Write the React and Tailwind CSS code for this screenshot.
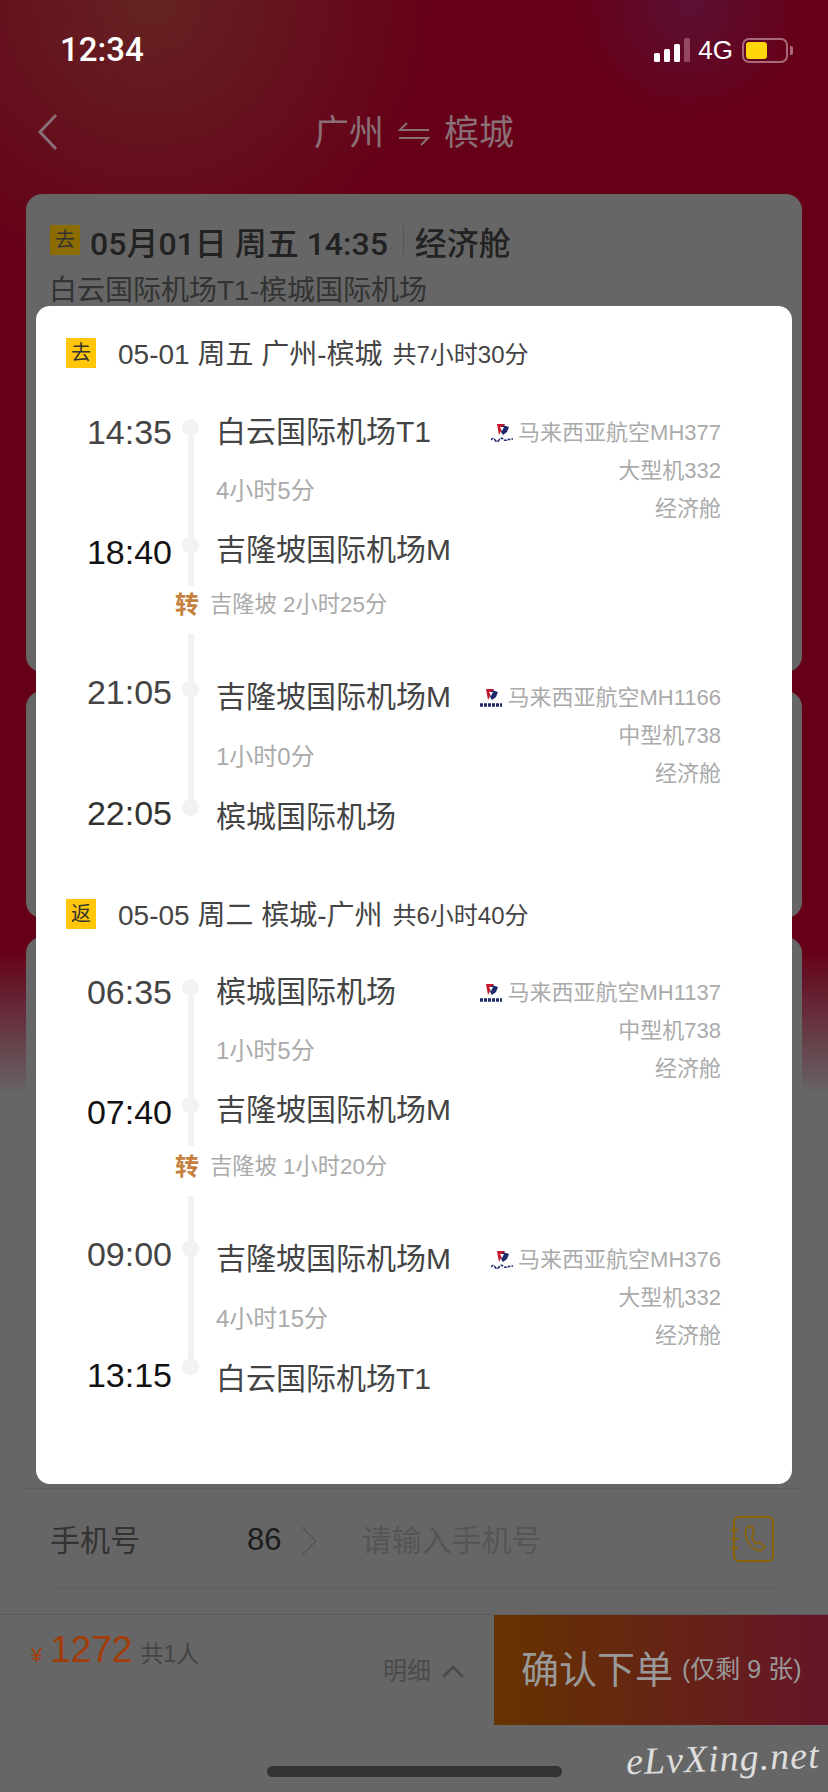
import React from "react";

const FONT = "font-['Liberation_Sans','Noto_Sans_CJK_SC',sans-serif]";

function AirlineLogo({ block }) {
  return (
    <svg width="22" height="19" viewBox="0 0 22 19" className="shrink-0">
      <path d="M6 0 L14 0 L11 5 L8 11 Z" fill="#c4172c" />
      <path d="M12 1 L18 3 L16 8 L12 11 L10 8 Z" fill="#1d2a6b" />
      <path d="M9 3 L13 3 L11 7 Z" fill="#ffffff" />
      {block ? (
        <path d="M0 16 H22" stroke="#1d2a6b" strokeWidth="3.5" strokeDasharray="3 1" />
      ) : (
        <path d="M0 16 Q2 13 4 16 T8 16 T12 15 T16 16 T22 15" stroke="#1d2a6b" strokeWidth="1.5" fill="none" strokeDasharray="3 1" />
      )}
    </svg>
  );
}

function Leg({ variant, stubClass, dep, arr, depStrong, arrStrong, from, to, dur, airline, block, plane, last }) {
  const b = variant === "b";
  return (
    <div className={b ? "flex items-start mt-[12px]" : "flex items-start"}>
      <div className={b ? "w-[106px] shrink-0 pt-[38px] flex flex-col text-right text-[34px] leading-[40px]" : "w-[106px] shrink-0 flex flex-col text-right text-[34px] leading-[40px]"}>
        <div className={depStrong ? "text-[#222]" : "text-[#444]"}>{dep}</div>
        <div className={b ? "h-[81px]" : "h-[80px]"} />
        <div className={arrStrong ? "text-[#111]" : "text-[#333]"}>{arr}</div>
      </div>

      <div className="w-[17px] ml-[10px] shrink-0 flex flex-col items-center">
        {b ? <div className={stubClass} /> : <div className="h-[8px]" />}
        <div className="w-[17px] h-[17px] rounded-full bg-[#f2f2f2] -mt-[1px]" />
        <div className="w-[6px] h-[101px] bg-[#f2f2f2]" />
        <div className="w-[17px] h-[17px] rounded-full bg-[#f2f2f2]" />
        {!last && <div className="w-[6px] h-[32px] bg-[#f2f2f2]" />}
      </div>

      <div className={b ? "ml-[17px] pt-[43px] flex flex-col" : "ml-[17px] flex flex-col"}>
        <div className="text-[30px] leading-[40px] text-[#444] whitespace-nowrap">{from}</div>
        <div className={b ? "h-[80px] flex items-center text-[24px] text-[#aaa]" : "h-[78px] flex items-center text-[24px] text-[#aaa]"}>{dur}</div>
        <div className="text-[30px] leading-[40px] text-[#444] whitespace-nowrap">{to}</div>
      </div>

      <div className={b ? "flex-1 pt-[45px] flex flex-col items-end text-[22px] leading-[38px] text-[#aaa]" : "flex-1 pt-[2px] flex flex-col items-end text-[22px] leading-[38px] text-[#aaa]"}>
        <div className="flex items-center gap-[5px] whitespace-nowrap">
          <AirlineLogo block={block} />
          <span>{airline}</span>
        </div>
        <div>{plane}</div>
        <div>经济舱</div>
      </div>
    </div>
  );
}

function Transfer({ text }) {
  return (
    <div className="h-[36px] pt-[2px] flex items-center pl-[109px]">
      <span className="text-[24px] font-bold text-[#c6813e] w-[35px]">转</span>
      <span className="text-[22.3px] text-[#aaa]">{text}</span>
    </div>
  );
}

function SectionHead({ tag, route, total }) {
  return (
    <div className="flex items-center h-[30px]">
      <span className="w-[30px] h-[30px] bg-[#ffc60a] flex items-center justify-center text-[20px] text-[#333]">{tag}</span>
      <span className="ml-[22px] pt-[3px] text-[28px] text-[#444] whitespace-nowrap">{route}</span>
      <span className="ml-[10px] pt-[3px] text-[24px] text-[#444] whitespace-nowrap">{total}</span>
    </div>
  );
}

export default function App() {
  return (
    <div className={`${FONT} relative w-[828px] h-[1792px] overflow-hidden flex flex-col bg-[linear-gradient(180deg,#660018_0px,#660018_950px,#666666_1095px)]`}>
      <div className="absolute inset-x-0 top-0 h-[320px] bg-[radial-gradient(circle_at_150px_0px,#652322_0px,rgba(101,35,34,0)_290px)]" />
      <div className="absolute inset-x-0 top-0 h-[200px] bg-[radial-gradient(circle_at_690px_5px,#5c1033_0px,rgba(92,16,51,0)_115px)]" />

      {/* status bar */}
      <div className="relative h-[100px] shrink-0 flex items-start justify-between pl-[60px] pr-[35px] pt-[30px]">
        <span className="font-['Roboto'] font-medium text-[33px] leading-[40px] text-white">12:34</span>
        <div className="flex items-center h-[40px]">
          <div className="flex items-end gap-[3.5px] h-[24px]">
            <div className="w-[6.5px] h-[9px] rounded-[1.5px] bg-white" />
            <div className="w-[6.5px] h-[13px] rounded-[1.5px] bg-white" />
            <div className="w-[6.5px] h-[18px] rounded-[1.5px] bg-white" />
            <div className="w-[6.5px] h-[24px] rounded-[1.5px] bg-[#95485f]" />
          </div>
          <span className="ml-[8px] text-[26px] leading-[40px] text-white">4G</span>
          <div className="ml-[9px] w-[46px] h-[25px] rounded-[7px] border-2 border-[#a86a7a] p-[2px]">
            <div className="w-[21px] h-full rounded-[3px] bg-[#ffd60a]" />
          </div>
          <div className="ml-[2px] w-[3px] h-[9px] rounded-r-[2px] bg-[#a86a7a]" />
        </div>
      </div>

      {/* navigation */}
      <div className="relative h-[94px] shrink-0 flex items-start justify-center">
        <svg width="24" height="38" viewBox="0 0 24 38" className="absolute left-[36px] top-[13px]">
          <polyline points="20,2 4,19 20,36" fill="none" stroke="#8a6f76" strokeWidth="3" />
        </svg>
        <div className="flex items-center h-[64px] pt-[3px] text-[35px] text-[#8a6f76]">
          <span>广州</span>
          <svg width="32" height="24" viewBox="0 0 32 24" className="mx-[14px]">
            <path d="M31 8 H2 L9 1" fill="none" stroke="#8a6f76" strokeWidth="2" />
            <path d="M1 16 H30 L23 23" fill="none" stroke="#8a6f76" strokeWidth="2" />
          </svg>
          <span>槟城</span>
        </div>
      </div>

      {/* cards */}
      <div className="relative flex-1 min-h-0 overflow-hidden px-[26px] flex flex-col gap-[19px]">
        <div className="h-[478px] shrink-0 rounded-[16px] bg-[#666] px-[24px] pt-[31px]">
          <div className="flex items-center h-[30px] font-['Roboto','Noto_Sans_CJK_SC',sans-serif] font-medium">
            <span className="w-[30px] h-[30px] bg-[#8a6c00] flex items-center justify-center text-[20px] font-normal text-[#333]">去</span>
            <span className="ml-[10px] pt-[7px] text-[32px] text-[#222] whitespace-nowrap">05月01日 周五 14:35</span>
            <span className="ml-[15px] w-px h-[28px] bg-[#555]" />
            <span className="ml-[11px] pt-[7px] text-[32px] text-[#222]">经济舱</span>
          </div>
          <div className="mt-[16px] -ml-[1px] text-[28px] leading-[40px] text-[#333] whitespace-nowrap">白云国际机场T1-槟城国际机场</div>
        </div>
        <div className="h-[227px] shrink-0 rounded-[16px] bg-[#666]" />
        <div className="flex-1 rounded-t-[16px] bg-[#666] flex flex-col justify-end">
          <div className="h-[126px] mx-[-2px] border-t border-[#5e5e5e] px-[26px]">
            <div className="h-[100px] pt-[4px] border-b border-[#5e5e5e] flex items-center">
              <span className="text-[30px] text-[#333] w-[197px]">手机号</span>
              <span className="text-[31px] text-[#1c1c1c]">86</span>
              <svg width="18" height="32" viewBox="0 0 18 32" className="ml-[19px]">
                <polyline points="2,2 16,16 2,30" fill="none" stroke="#555" strokeWidth="1.5" />
              </svg>
              <span className="ml-[43px] text-[30px] text-[#555]">请输入手机号</span>
              <svg width="44" height="46" viewBox="0 0 44 46" className="ml-auto mr-[3px] -mt-[4px]">
                <rect x="3" y="1" width="39" height="44" rx="5" fill="none" stroke="#8a6200" strokeWidth="2" />
                <path d="M0 14 H7 M0 23 H7 M0 32 H7" fill="none" stroke="#8a6200" strokeWidth="2" />
                <path d="M17 11 C13 13 14 20 17 26 C20 32 26 36 31 34 L34 31 L28 26 L25 28 C23 26 21 22 21 20 L23 17 L21 10 Z" fill="none" stroke="#8a6200" strokeWidth="1.6" />
              </svg>
            </div>
          </div>
        </div>
      </div>

      {/* footer */}
      <div className="relative h-[178px] shrink-0 bg-[#666] border-t border-[#5c5c5c]">
        <div className="flex items-start h-[110px]">
          <div className="w-[383px] pl-[31px] pt-[12px] flex items-baseline whitespace-nowrap">
            <span className="text-[20px] text-[#a33c08]">¥</span>
            <span className="ml-[8px] text-[37px] leading-[46px] text-[#a33c08]">1272</span>
            <span className="ml-[8px] text-[23px] text-[#444]">共1人</span>
          </div>
          <div className="w-[111px] pt-[26px] flex items-center h-[86px]">
            <span className="text-[24px] text-[#4a4a4a]">明细</span>
            <svg width="24" height="14" viewBox="0 0 24 14" className="ml-[10px]">
              <polyline points="2,13 12,3 22,13" fill="none" stroke="#4a4a4a" strokeWidth="2.5" />
            </svg>
          </div>
          <div className="flex-1 h-[110px] bg-[linear-gradient(90deg,#663300,#661528)] flex items-center pl-[27px] whitespace-nowrap">
            <span className="text-[38px] text-[#999]">确认下单</span>
            <span className="ml-[9px] text-[25px] text-[#999]">(仅剩 9 张)</span>
          </div>
        </div>
        <div className="mt-[41px] mx-auto w-[295px] h-[11px] rounded-full bg-[#333]" />
      </div>

      <div className="absolute right-[8px] bottom-[10px] font-['Liberation_Serif'] italic text-[38px] leading-[48px] tracking-[1px] text-[#ddd] -rotate-2">eLvXing.net</div>

      {/* flight details dialog */}
      <div className="absolute left-[36px] top-[306px] w-[756px] h-[1178px] rounded-[14px] bg-white pt-[32px] pl-[30px] pr-[71px]">
        <SectionHead tag="去" route="05-01 周五 广州-槟城" total="共7小时30分" />
        <div className="mt-[44px]">
          <Leg dep="14:35" arr="18:40" arrStrong from="白云国际机场T1" to="吉隆坡国际机场M" dur="4小时5分" airline="马来西亚航空MH377" plane="大型机332" />
          <Transfer text="吉隆坡 2小时25分" />
          <Leg variant="b" stubClass="w-[6px] h-[48px] bg-[#f2f2f2]" last block dep="21:05" arr="22:05" from="吉隆坡国际机场M" to="槟城国际机场" dur="1小时0分" airline="马来西亚航空MH1166" plane="中型机738" />
        </div>
        <div className="mt-[62px]">
          <SectionHead tag="返" route="05-05 周二 槟城-广州" total="共6小时40分" />
        </div>
        <div className="mt-[43px]">
          <Leg block dep="06:35" arr="07:40" arrStrong from="槟城国际机场" to="吉隆坡国际机场M" dur="1小时5分" airline="马来西亚航空MH1137" plane="中型机738" />
          <div className="mt-[2px]">
            <Transfer text="吉隆坡 1小时20分" />
          </div>
          <Leg variant="b" stubClass="w-[6px] h-[45px] bg-[#f2f2f2]" last dep="09:00" arr="13:15" arrStrong from="吉隆坡国际机场M" to="白云国际机场T1" dur="4小时15分" airline="马来西亚航空MH376" plane="大型机332" />
        </div>
      </div>
    </div>
  );
}
